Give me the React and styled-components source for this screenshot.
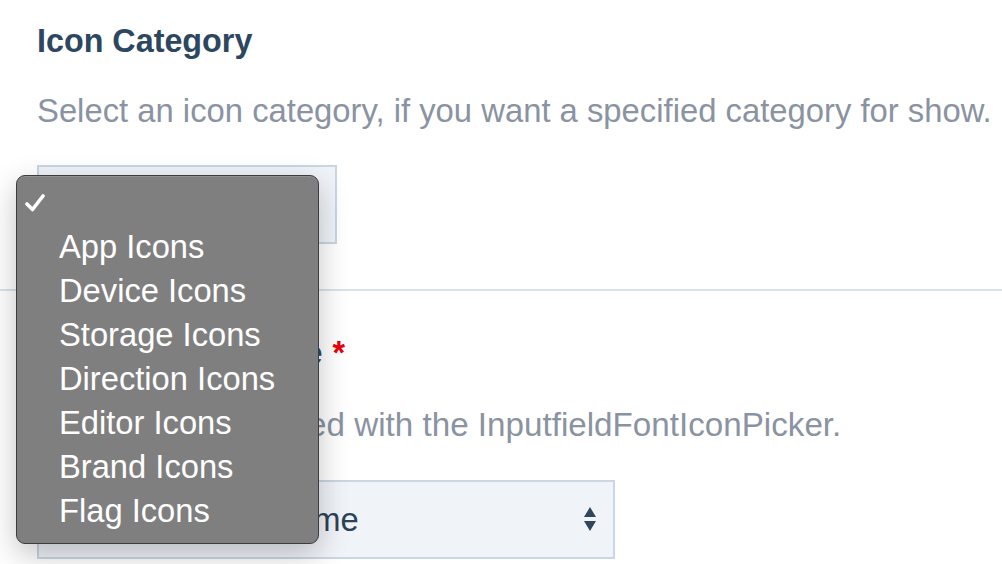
import React from 'react';
import styled, { createGlobalStyle } from 'styled-components';

const GlobalStyle = createGlobalStyle`
  html, body {
    margin: 0;
    padding: 0;
    background: #ffffff;
  }
  body {
    font-family: "Liberation Sans", Arial, sans-serif;
    overflow: hidden;
  }
`;

const Page = styled.div`
  position: relative;
  width: 1002px;
  height: 564px;
  overflow: hidden;
  background: #fff;
`;

const Field = styled.div`
  padding: ${p => p.$pad};
`;

const Label = styled.div`
  font-size: 32.3px;
  line-height: 40px;
  font-weight: 700;
  color: #2c4760;
  white-space: nowrap;
`;

const Required = styled.span`
  color: #e8000b;
  margin-left: 10px;
`;

const Description = styled.p`
  margin: ${p => p.$top}px 0 0;
  font-size: ${p => p.$size || 32.8}px;
  line-height: 40px;
  color: #8a93a1;
  white-space: nowrap;
`;

const SelectBox = styled.div`
  box-sizing: border-box;
  margin-top: ${p => p.$top}px;
  width: ${p => p.$width}px;
  height: 79px;
  display: flex;
  align-items: center;
  justify-content: space-between;
  padding: 0 17px 0 26px;
  background: #f0f3f8;
  border: 2px solid #c9d6e3;
  font-size: 32.7px;
  color: #2c4257;
  white-space: nowrap;
`;

const Divider = styled.hr`
  margin: 0;
  border: 0;
  height: 2px;
  background: #d9e3ec;
`;

const Menu = styled.ul`
  position: absolute;
  left: 16px;
  top: 175px;
  box-sizing: border-box;
  width: 303px;
  margin: 0;
  padding: 5px 0 10px;
  list-style: none;
  background: #7f7f7f;
  border: 1px solid #3d3d3d;
  border-radius: 9px;
  box-shadow: 0 10px 30px rgba(0, 0, 0, 0.24), inset 0 1px 0 rgba(255, 255, 255, 0.15);
`;

const MenuItem = styled.li`
  position: relative;
  height: 44px;
  line-height: 44px;
  padding-left: 42px;
  font-size: 32.7px;
  color: #ffffff;
  white-space: nowrap;
`;

const Check = styled.svg`
  position: absolute;
  left: 8px;
  top: 13px;
`;

const options = [
  '',
  'App Icons',
  'Device Icons',
  'Storage Icons',
  'Direction Icons',
  'Editor Icons',
  'Brand Icons',
  'Flag Icons',
];

const Arrows = () => (
  <svg width="12" height="25" viewBox="0 0 12 25">
    <path d="M6 0 L12 10 L0 10 Z" fill="#2f475c" />
    <path d="M0 14 L12 14 L6 24 Z" fill="#2f475c" />
  </svg>
);

export default function App() {
  return (
    <Page>
      <GlobalStyle />
      <Field $pad="21px 37px 45px">
        <Label>Icon Category</Label>
        <Description $top={30}>
          Select an icon category, if you want a specified category for show.
        </Description>
        <SelectBox $top={34} $width={300} />
      </Field>
      <Divider />
      <Field $pad="42px 37px 0">
        <Label>
          Icon Picker Theme<Required>*</Required>
        </Label>
        <Description $top={32} $size={33.2}>
          Picker theme is used with the InputfieldFontIconPicker.
        </Description>
        <SelectBox $top={35} $width={578}>
          <span>Default Grey Theme</span>
          <Arrows />
        </SelectBox>
      </Field>

      <Menu>
        {options.map((o, i) => (
          <MenuItem key={i}>
            {i === 0 && (
              <Check width="20" height="18" viewBox="0 0 20 18">
                <path
                  d="M2 10 L7.5 15.5 L18 2"
                  fill="none"
                  stroke="#fff"
                  strokeWidth="3.6"
                  strokeLinecap="round"
                  strokeLinejoin="round"
                />
              </Check>
            )}
            {o}
          </MenuItem>
        ))}
      </Menu>
    </Page>
  );
}
